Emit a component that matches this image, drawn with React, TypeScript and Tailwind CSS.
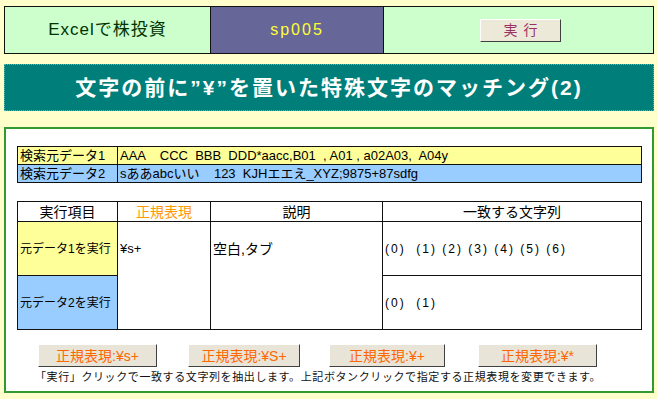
const font = { fontFamily: '"Liberation Sans", "Noto Sans CJK JP", sans-serif' };

const patterns = ['正規表現:¥s+', '正規表現:¥S+', '正規表現:¥+', '正規表現:¥*'];
const btnLayout = ['ml-[34px] w-[119px]', 'ml-[31px] w-[112px]', 'ml-[29px] w-[116px]', 'ml-[33px] w-[119px]'];

export default function App() {
  return (
    <div className="w-[658px] h-[399px] bg-[#FFFFCC] flex flex-col overflow-hidden" style={font}>
      {/* header bar */}
      <div className="mt-[6px] mx-[4px] h-[48px] flex border border-[#111]">
        <div className="w-[206px] bg-[#CCFFCC] border-r border-[#111] flex items-center justify-center text-[17px] tracking-[1px] text-[#003300]">
          Excelで株投資
        </div>
        <div className="w-[173px] bg-[#666699] border-r border-[#111] flex items-center justify-center text-[16px] tracking-[2px] text-[#FFFF33]">
          sp005
        </div>
        <div className="flex-1 bg-[#CCFFCC] flex items-center justify-center">
          <button className="w-[81px] h-[23px] ml-[4px] bg-[#ECE9D8] border border-t-white border-l-white border-r-[#404040] border-b-[#404040] text-[14px] text-[#993366] tracking-[6px] leading-none pl-[6px]">
            実行
          </button>
        </div>
      </div>

      {/* title banner */}
      <div className="mt-[10px] mx-[4px] h-[47px] bg-[#007F7A] border border-dotted border-[#5FB8A8] flex items-center justify-center text-white text-[21px] font-bold tracking-[2px]">
        文字の前に”¥”を置いた特殊文字のマッチング(2)
      </div>

      {/* main panel */}
      <div className="mt-[16px] mx-[4px] h-[266px] bg-white border-2 border-[#339933] pl-[11px] pr-[10px] pt-[17px] flex flex-col">
        <div className="flex flex-col border border-[#111] text-[13px] leading-none">
          <div className="flex h-[18px] bg-[#FFFF99] border-b border-[#111]">
            <div className="w-[100px] border-r border-[#111] flex items-center pl-[2px]">検索元データ1</div>
            <div className="flex-1 flex items-center pl-[2px] whitespace-pre">AAA    CCC  BBB  DDD*aacc,B01  , A01 , a02A03,  A04y</div>
          </div>
          <div className="flex h-[17px] bg-[#99CCFF]">
            <div className="w-[100px] border-r border-[#111] flex items-center pl-[2px]">検索元データ2</div>
            <div className="flex-1 flex items-center pl-[2px] whitespace-pre">sああabcいい    123  KJHエエえ_XYZ;9875+87sdfg</div>
          </div>
        </div>

        <div className="mt-[18px] border border-[#111] flex flex-col text-[13px]">
          <div className="flex h-[20px] border-b border-[#111] text-[14px] leading-none">
            <div className="w-[100px] border-r border-[#111] flex items-center justify-center">実行項目</div>
            <div className="w-[93px] border-r border-[#111] flex items-center justify-center text-[#FF9900]">正規表現</div>
            <div className="w-[172px] border-r border-[#111] flex items-center justify-center">説明</div>
            <div className="flex-1 flex items-center justify-center">一致する文字列</div>
          </div>
          <div className="flex h-[107px]">
            <div className="w-[100px] border-r border-[#111] flex flex-col text-[12px]">
              <div className="h-[54px] bg-[#FFFF99] border-b border-[#111] flex items-center pl-[2px]">元データ1を実行</div>
              <div className="flex-1 bg-[#99CCFF] flex items-center pl-[2px]">元データ2を実行</div>
            </div>
            <div className="w-[93px] border-r border-[#111] flex flex-col">
              <div className="h-[54px] flex items-center pl-[2px]">¥s+</div>
            </div>
            <div className="w-[172px] border-r border-[#111] flex flex-col">
              <div className="h-[54px] flex items-center pl-[2px] text-[14px]">空白,タブ</div>
            </div>
            <div className="flex-1 flex flex-col text-[12px] tracking-[2px]">
              <div className="h-[54px] border-b border-[#111] flex items-center pl-[2px] whitespace-pre">(0)  (1) (2) (3) (4) (5) (6)</div>
              <div className="flex-1 flex items-center pl-[2px] whitespace-pre">(0)  (1)</div>
            </div>
          </div>
        </div>

        <div className="mt-[14px] flex -ml-[13px]">
          {patterns.map((p, i) => (
            <button
              key={p}
              className={`${btnLayout[i]} h-[23px] bg-[#E8E5D8] border border-t-white border-l-white border-r-[#404040] border-b-[#404040] text-[14px] text-[#FF6600] leading-none`}
            >
              {p}
            </button>
          ))}
        </div>

        <div className="mt-[5px] ml-[18px] text-[11px] tracking-[0.6px] leading-none text-[#111] whitespace-nowrap">
          「実行」クリックで一致する文字列を抽出します。上記ボタンクリックで指定する正規表現を変更できます。
        </div>
      </div>
    </div>
  );
}
